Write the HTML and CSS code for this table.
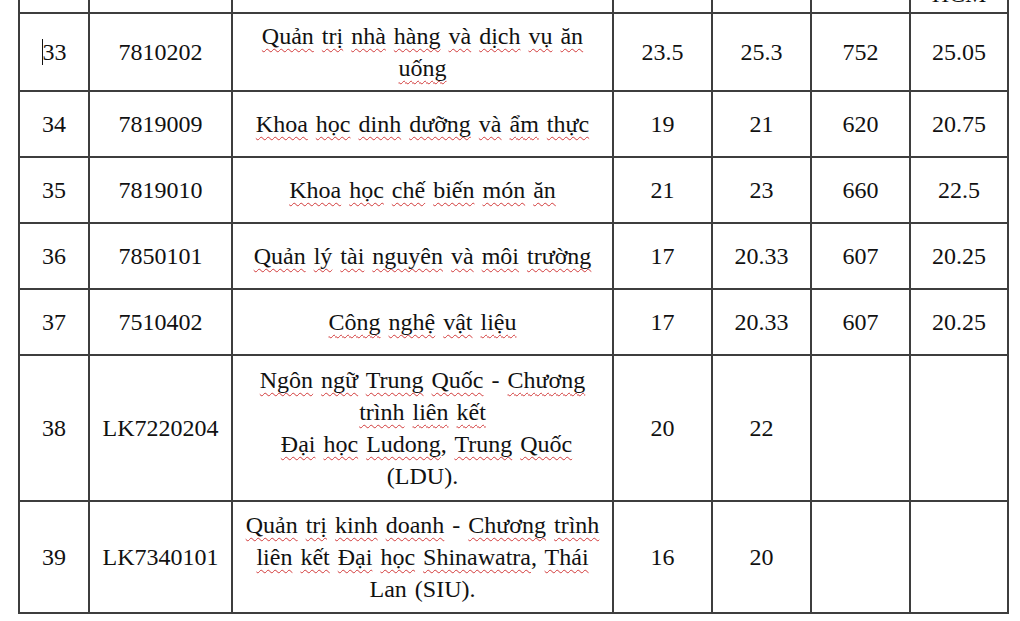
FILE: index.html
```html
<!DOCTYPE html>
<html lang="vi">
<head>
<meta charset="utf-8">
<title>Bảng điểm chuẩn</title>
<link rel="stylesheet" href="styles.css">
</head>
<body>
<div class="sheet">
  <div class="grid">
    <div class="cell head"></div>
    <div class="cell head"></div>
    <div class="cell head"></div>
    <div class="cell head"></div>
    <div class="cell head"></div>
    <div class="cell head"></div>
    <div class="cell head"><div class="cut">HCM</div></div>

    <div class="cell"><div class="t"><span class="caret"></span>33</div></div>
    <div class="cell"><div class="t">7810202</div></div>
    <div class="cell"><div class="t name"><span class="sp">Quản</span> <span class="sp">trị</span> <span class="sp">nhà</span> <span class="sp">hàng</span> <span class="sp">và</span> <span class="sp">dịch</span> <span class="sp">vụ</span> <span class="sp">ăn</span> <span class="sp">uống</span></div></div>
    <div class="cell"><div class="t">23.5</div></div>
    <div class="cell"><div class="t">25.3</div></div>
    <div class="cell"><div class="t">752</div></div>
    <div class="cell"><div class="t">25.05</div></div>

    <div class="cell"><div class="t">34</div></div>
    <div class="cell"><div class="t">7819009</div></div>
    <div class="cell"><div class="t name"><span class="sp">Khoa</span> <span class="sp">học</span> <span class="sp">dinh</span> <span class="sp">dưỡng</span> <span class="sp">và</span> <span class="sp">ẩm</span> <span class="sp">thực</span></div></div>
    <div class="cell"><div class="t">19</div></div>
    <div class="cell"><div class="t">21</div></div>
    <div class="cell"><div class="t">620</div></div>
    <div class="cell"><div class="t">20.75</div></div>

    <div class="cell"><div class="t">35</div></div>
    <div class="cell"><div class="t">7819010</div></div>
    <div class="cell"><div class="t name"><span class="sp">Khoa</span> <span class="sp">học</span> <span class="sp">chế</span> <span class="sp">biến</span> <span class="sp">món</span> <span class="sp">ăn</span></div></div>
    <div class="cell"><div class="t">21</div></div>
    <div class="cell"><div class="t">23</div></div>
    <div class="cell"><div class="t">660</div></div>
    <div class="cell"><div class="t">22.5</div></div>

    <div class="cell"><div class="t">36</div></div>
    <div class="cell"><div class="t">7850101</div></div>
    <div class="cell"><div class="t name"><span class="sp">Quản</span> <span class="sp">lý</span> <span class="sp">tài</span> <span class="sp">nguyên</span> <span class="sp">và</span> <span class="sp">môi</span> <span class="sp">trường</span></div></div>
    <div class="cell"><div class="t">17</div></div>
    <div class="cell"><div class="t">20.33</div></div>
    <div class="cell"><div class="t">607</div></div>
    <div class="cell"><div class="t">20.25</div></div>

    <div class="cell"><div class="t">37</div></div>
    <div class="cell"><div class="t">7510402</div></div>
    <div class="cell"><div class="t name"><span class="sp">Công</span> <span class="sp">nghệ</span> <span class="sp">vật</span> <span class="sp">liệu</span></div></div>
    <div class="cell"><div class="t">17</div></div>
    <div class="cell"><div class="t">20.33</div></div>
    <div class="cell"><div class="t">607</div></div>
    <div class="cell"><div class="t">20.25</div></div>

    <div class="cell"><div class="t">38</div></div>
    <div class="cell"><div class="t">LK7220204</div></div>
    <div class="cell"><div class="t name"><span class="sp">Ngôn</span> <span class="sp">ngữ</span> <span class="sp">Trung</span> <span class="sp">Quốc</span> - <span class="sp">Chương</span> <span class="sp">trình</span> <span class="sp">liên</span> <span class="sp">kết</span><br>&nbsp;<span class="sp">Đại</span> <span class="sp">học</span> <span class="sp">Ludong</span>, <span class="sp">Trung</span> <span class="sp">Quốc</span> (LDU).</div></div>
    <div class="cell"><div class="t">20</div></div>
    <div class="cell"><div class="t">22</div></div>
    <div class="cell"></div>
    <div class="cell"></div>

    <div class="cell"><div class="t">39</div></div>
    <div class="cell"><div class="t">LK7340101</div></div>
    <div class="cell"><div class="t name"><span class="sp">Quản</span> <span class="sp">trị</span> <span class="sp">kinh</span> <span class="sp">doanh</span> - <span class="sp">Chương</span> <span class="sp">trình</span> <span class="sp">liên</span> <span class="sp">kết</span> <span class="sp">Đại</span> <span class="sp">học</span> <span class="sp">Shinawatra</span>, <span class="sp">Thái</span> Lan (SIU).</div></div>
    <div class="cell"><div class="t">16</div></div>
    <div class="cell"><div class="t">20</div></div>
    <div class="cell"></div>
    <div class="cell"></div>
  </div>
  <span class="handle"></span>
</div>
</body>
</html>
```

FILE: styles.css
```css
html, body {
  margin: 0;
  padding: 0;
  background: #ffffff;
  overflow: hidden;
}

.sheet {
  position: relative;
  width: 992px;
  margin: -40px 0 0 18px;
}

.grid {
  display: grid;
  grid-template-columns: 68px 141px 379px 97px 97px 97px 96px;
  grid-template-rows: 50px 76px 64px 64px 64px 64px 144px 110px;
  gap: 2px;
  padding: 2px;
  background: #3e3e3e;
  width: max-content;
}

.cell {
  background: #ffffff;
  display: flex;
  align-items: center;
  justify-content: center;
  padding: 0 8px;
  box-sizing: border-box;
  font-family: "Liberation Serif", "Times New Roman", "DejaVu Serif", serif;
  font-size: 24px;
  line-height: 32px;
  color: #111111;
}

.t {
  text-align: center;
  font-family: "Liberation Serif", "Times New Roman", "DejaVu Serif", serif;
}

.name {
  word-spacing: 2px;
}

.cell.head {
  align-items: flex-end;
  overflow: hidden;
}

.cut {
  line-height: 32px;
  margin-bottom: 2px;
}

.sp {
  text-decoration: underline wavy #d23a3a;
  text-decoration-thickness: 1px;
  text-underline-offset: 4px;
  text-decoration-skip-ink: none;
}

.caret {
  display: inline-block;
  width: 0;
  height: 26px;
  border-left: 1.5px solid #111;
  vertical-align: -5px;
}

.handle {
  position: absolute;
  right: -6px;
  bottom: -7px;
  width: 5px;
  height: 5px;
  border: 1px solid #8a8a8a;
  background: #fff;
}
```
